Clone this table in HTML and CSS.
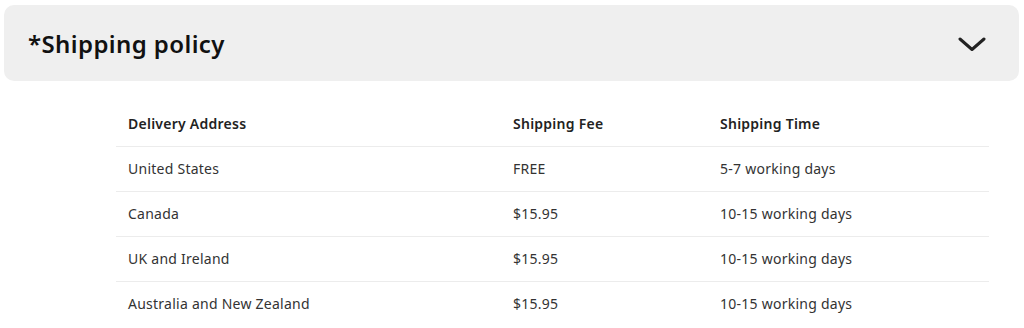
FILE: index.html
```html
<html>
    <head>
        <link rel="stylesheet" href="styles.css">
    </head>
    <body>
        <div class="policy">
            <div class="policyHeader">
                <h2>*Shipping policy</h2>
                <svg class="chevron" width="28" height="16" viewBox="0 0 28 16">
                    <path d="M2 3 L14 13.5 L26 3" fill="none" stroke="#222" stroke-width="3" stroke-linecap="round" stroke-linejoin="round"/>
                </svg>
            </div>
            <table class="shippingTable">
                <col class="colAddress">
                <col class="colFee">
                <col class="colTime">
                <thead>
                    <tr>
                        <th>Delivery Address</th>
                        <th>Shipping Fee</th>
                        <th>Shipping Time</th>
                    </tr>
                </thead>
                <tbody>
                    <tr>
                        <td>United States</td>
                        <td>FREE</td>
                        <td>5-7 working days</td>
                    </tr>
                    <tr>
                        <td>Canada</td>
                        <td>$15.95</td>
                        <td>10-15 working days</td>
                    </tr>
                    <tr>
                        <td>UK and Ireland</td>
                        <td>$15.95</td>
                        <td>10-15 working days</td>
                    </tr>
                    <tr>
                        <td>Australia and New Zealand</td>
                        <td>$15.95</td>
                        <td>10-15 working days</td>
                    </tr>
                </tbody>
            </table>
        </div>
    </body>
</html>
```

FILE: styles.css
```css
/* Shipping policy accordion */
html{
	background-color: #ffffff;
}
body{
	margin: 0;
	padding: 5px 5px 0 4px;
	font-family: "Noto Sans", "Lato", sans-serif;
	color: #222222;
	overflow: hidden;
}
.policyHeader{
	display: flex;
	align-items: center;
	justify-content: space-between;
	height: 76px;
	padding: 0 33px 0 24px;
	background-color: #efefef;
	border-radius: 10px;
}
.policyHeader h2{
	margin: 0;
	font-size: 24px;
	font-weight: 600;
	letter-spacing: 0.4px;
	color: #111111;
}
.chevron{
	display: block;
	margin-top: 2px;
}
.shippingTable{
	width: 873px;
	margin: 20px 0 0 112px;
	border-collapse: collapse;
	font-size: 14px;
	letter-spacing: 0.25px;
}
.colAddress{ width: 385px; }
.colFee{ width: 207px; }
.colTime{ width: 281px; }
.shippingTable th,
.shippingTable td{
	height: 45px;
	padding: 0 12px;
	text-align: left;
	vertical-align: middle;
}
.shippingTable th{
	font-weight: 600;
	color: #222222;
	border-bottom: 1px solid #ececec;
}
.shippingTable td{
	color: #333333;
	border-bottom: 1px solid #ececec;
}
.shippingTable tbody tr:last-child td{
	border-bottom: none;
}
```
